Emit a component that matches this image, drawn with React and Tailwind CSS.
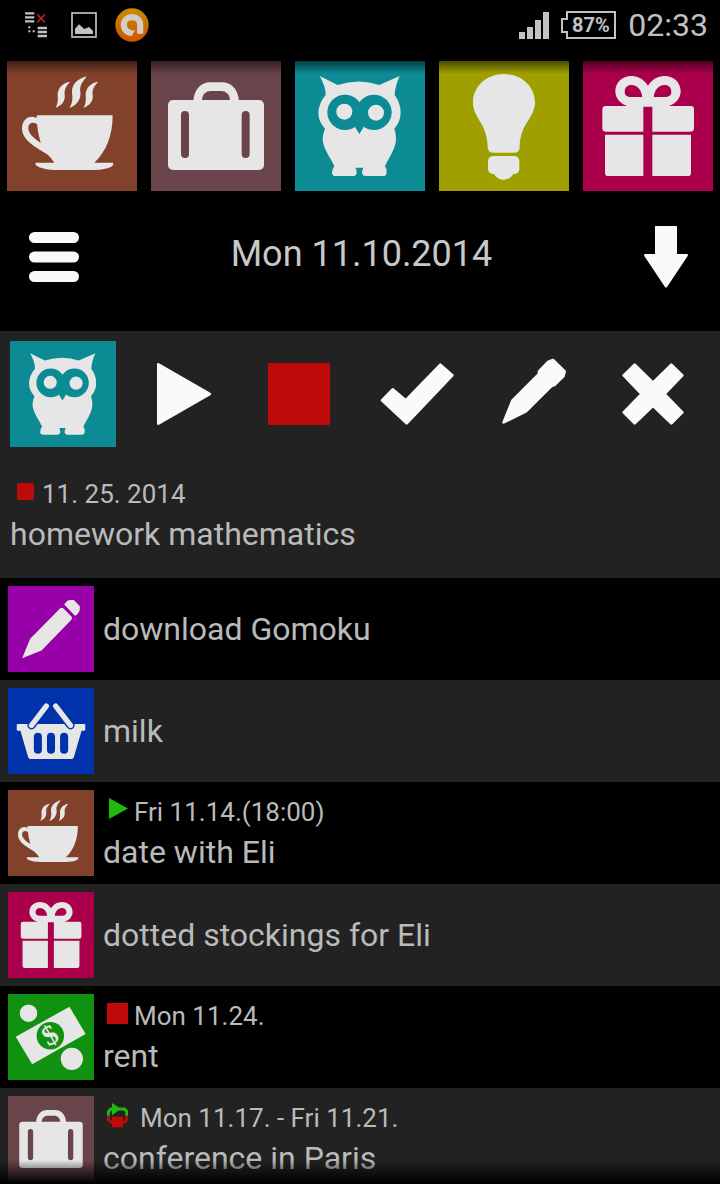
import React from "react";

/* ---------- category drawings ---------- */

function Cup() {
  return (
    <svg viewBox="0 0 390 390" className="w-full h-full fill-[#e6e6e6]" aria-hidden="true">
      <path
        fillRule="evenodd"
        d="M90 163H317C317 222 298 272 262 305H318C324 314 308 325 262 327H145C105 325 80 315 86 305H142C137 298 130 288 120 280C90 260 45 240 45 202C45 175 68 160 88 171ZM91 192C85 182 64 182 64 202C64 220 84 234 101 245C98 230 92 215 91 192Z"
      />
      <path d="M190 62C170 64 150 80 152 105C154 122 150 132 146 141C165 133 176 120 173 100C171 84 178 75 190 62Z" />
      <path d="M239 46C215 52 193 68 195 96C198 118 195 128 187 141C212 132 223 112 220 92C217 72 228 62 239 46Z" />
      <path d="M274 62C254 64 234 80 236 105C238 122 234 132 230 141C249 133 260 120 257 100C255 84 262 75 274 62Z" />
    </svg>
  );
}

function Suitcase() {
  return (
    <svg viewBox="0 0 390 390" className="w-full h-full fill-[#e6e6e6]" aria-hidden="true">
      <rect x="51" y="117" width="288" height="210" rx="15" />
      <path d="M127 119C130 85 150 64 178 64H213C241 64 261 85 264 119H237C237 100 225 90 210 90H180C165 90 153 100 153 119Z" />
      <rect x="90" y="150" width="24" height="141" rx="12" fill="#69444a" />
      <rect x="272" y="150" width="24" height="141" rx="12" fill="#69444a" />
    </svg>
  );
}

function Owl() {
  return (
    <svg viewBox="0 0 390 390" className="w-full h-full fill-[#e6e6e6]" aria-hidden="true">
      <path d="M74 45L128 72Q193 51 253 72L314 45Q300 76 299 102Q317 126 317 155Q317 181 298 203Q303 216 303 232C303 262 285 285 270 315Q277 325 275 335Q274 345 264 345H212Q201 345 201 334Q201 328 205 320H181Q186 328 185 335Q184 345 174 345H122Q112 345 111 335Q110 326 118 315C104 285 83 262 83 232Q84 216 90 203Q70 181 70 155Q71 126 92 102Q92 76 74 45Z" />
      <g fill="#0d8b95">
        <circle cx="150" cy="154" r="53" />
        <circle cx="237" cy="154" r="53" />
        <path d="M193 170L180 198L193 219L206 198Z" />
      </g>
      <circle cx="148" cy="152" r="24" />
      <circle cx="243" cy="155" r="24" />
    </svg>
  );
}

function Bulb() {
  return (
    <svg viewBox="0 0 390 390" className="w-full h-full fill-[#e6e6e6]" aria-hidden="true">
      <path d="M195 39C247 39 288 76 288 124C288 172 243 187 242 258Q242 275 226 275H162Q147 275 146 258C145 187 102 172 102 124C102 76 143 39 195 39Z" />
      <rect x="147" y="285" width="94" height="54" rx="15" />
      <path d="M162 332C174 364 214 364 226 332Z" />
    </svg>
  );
}

function Gift() {
  return (
    <svg viewBox="0 0 390 390" className="w-full h-full fill-[#e6e6e6]" aria-hidden="true">
      <path
        fillRule="evenodd"
        d="M138 137C112 130 97 112 97 91C97 64 118 45 145 45C168 45 185 58 195 74C205 58 222 45 245 45C272 45 293 64 293 91C293 112 278 130 252 137ZM125 92C125 102 132 108 145 108H178C176 90 165 72 145 72C133 72 125 80 125 92ZM265 92C265 102 258 108 245 108H212C214 90 225 72 245 72C257 72 265 80 265 92Z"
      />
      <path d="M68 135H181V212H68Q58 212 58 202V145Q58 135 68 135ZM208 135H323Q333 135 333 145V202Q333 212 323 212H208Z" />
      <path d="M66 221H181V345H76Q66 345 66 335ZM208 221H324V335Q324 345 314 345H208Z" />
    </svg>
  );
}

function Pencil() {
  return (
    <svg viewBox="0 0 256 256" className="w-full h-full fill-[#e6e6e6]" aria-hidden="true">
      <path d="M42 215L66 157L154 68Q160 62 166 68L189 91Q193 96 188 101L100 192Z" />
      <path d="M168 56Q167 53 170 51L178 43Q181 41 196 42L212 58Q216 62 212 77L204 86Q200 89 197 86Z" />
    </svg>
  );
}

function Basket() {
  return (
    <svg viewBox="0 0 256 256" className="w-full h-full fill-[#e6e6e6]" aria-hidden="true">
      <path d="M29 107H227Q230 107 230 110V124Q230 127 226 127H219L196 206Q194 211 190 211H66Q62 211 60 206L37 127H30Q26 127 26 124V110Q26 107 29 107Z" />
      <g fill="#0033ab">
        <rect x="77" y="133" width="24" height="63" rx="12" />
        <rect x="116" y="133" width="24" height="63" rx="12" />
        <rect x="155" y="133" width="24" height="63" rx="12" />
      </g>
      <g fill="none" strokeLinecap="round">
        <path d="M114 54L70 111M142 54L186 111" stroke="#0033ab" strokeWidth="25" />
        <path d="M114 54L70 111M142 54L186 111" stroke="#e6e6e6" strokeWidth="16" />
      </g>
    </svg>
  );
}

function Money() {
  return (
    <svg viewBox="0 0 256 256" className="w-full h-full fill-[#e6e6e6]" aria-hidden="true">
      <path d="M23 127L183 38L231 119L72 209Z" />
      <circle cx="126" cy="124" r="41" fill="#109210" />
      <text
        x="126"
        y="150"
        textAnchor="middle"
        transform="rotate(-30 126 124)"
        className="font-['Liberation_Serif',serif] font-bold text-[84px]"
      >
        $
      </text>
      <circle cx="61" cy="57" r="29" stroke="#109210" strokeWidth="6" />
      <circle cx="190" cy="193" r="36" stroke="#109210" strokeWidth="6" />
    </svg>
  );
}

/* ---------- small date markers ---------- */

function StartMark() {
  return (
    <svg viewBox="0 0 21 21" className="w-[21px] h-[21px] mb-2 shrink-0" aria-hidden="true">
      <path d="M2 0L21 10.5L2 21Z" fill="#20b90c" />
    </svg>
  );
}

function DueMark() {
  return <span className="w-[21px] h-[21px] mb-1.5 shrink-0 bg-[#bf0a0a]" />;
}

function RangeMark() {
  return (
    <svg viewBox="0 0 63 75" className="w-[21px] h-[25px] mb-1.5 mr-1.5 shrink-0" aria-hidden="true">
      <g fill="none" strokeWidth="9">
        <path d="M4 38V26L12 18H18M36 18H52L59 25V38" stroke="#20b90c" />
        <path d="M4 38V50L12 57H18M44 57H52L59 50V38" stroke="#bf0a0a" />
      </g>
      <path d="M15 0L42 17L15 37Z" fill="#20b90c" />
      <rect x="15" y="41" width="33" height="32" fill="#bf0a0a" />
    </svg>
  );
}

/* ---------- data ---------- */

const categories = [
  { name: "Leisure", color: "bg-[#82412b]", Icon: Cup },
  { name: "Travel", color: "bg-[#69444a]", Icon: Suitcase },
  { name: "School", color: "bg-[#0d8b95]", Icon: Owl },
  { name: "Ideas", color: "bg-[#9fa000]", Icon: Bulb },
  { name: "Gifts", color: "bg-[#aa004b]", Icon: Gift },
];

const tasks = [
  { title: "download Gomoku", color: "bg-[#9800a8]", Icon: Pencil },
  { title: "milk", color: "bg-[#0033ab]", Icon: Basket },
  { title: "date with Eli", date: "Fri 11.14.(18:00)", Mark: StartMark, color: "bg-[#82412b]", Icon: Cup },
  { title: "dotted stockings for Eli", color: "bg-[#aa004b]", Icon: Gift },
  { title: "rent", date: "Mon 11.24.", Mark: DueMark, color: "bg-[#109210]", Icon: Money },
  { title: "conference in Paris", date: "Mon 11.17. - Fri 11.21.", Mark: RangeMark, color: "bg-[#69444a]", Icon: Suitcase },
];

const actions = [
  {
    name: "Start",
    color: "fill-[#fafafa] stroke-[#fafafa]",
    d: "M52 31L206 120L52 209Z",
  },
  {
    name: "Stop",
    color: "fill-[#bf0a0a] stroke-[#bf0a0a]",
    d: "M31 31H209V209H31Z",
  },
  {
    name: "Done",
    color: "fill-[#fafafa] stroke-[#fafafa]",
    d: "M15 139L47 106L86 139L190 32L226 64L89 208Z",
  },
  {
    name: "Edit",
    color: "fill-[#fafafa] stroke-[#fafafa]",
    d: "M26 205L52 140L132 60V52L160 23L174 18L209 52L205 67L178 93L169 96L93 172Z",
  },
  {
    name: "Delete",
    color: "fill-[#fafafa] stroke-[#fafafa]",
    d: "M65 32L120 86L175 32L208 64L154 120L208 175L175 208L120 155L65 208L32 175L86 120L32 64Z",
  },
];

/* ---------- sections ---------- */

function StatusBar() {
  return (
    <div className="h-[50px] pl-6 pr-3 flex items-center justify-between text-[#c2c2c2]">
      <div className="flex items-center">
        <svg viewBox="0 0 72 78" className="w-6 h-[26px]" aria-hidden="true">
          <path
            d="M3 4H31M3 16H31M3 28H31M41 48H69M41 60H69M41 72H69"
            stroke="#c2c2c2"
            strokeWidth="7"
          />
          <path d="M13 43h6v6h-6zM13 55h6v6h-6zM26 55h6v6h-6z" fill="#c2c2c2" />
          <path d="M40 7L62 31M62 7L40 31" stroke="#b02222" strokeWidth="5" />
        </svg>
        <svg viewBox="0 0 78 78" className="w-[26px] h-[26px] ml-[23px]" aria-hidden="true">
          <rect x="3" y="3" width="72" height="72" fill="none" stroke="#c2c2c2" strokeWidth="5" />
          <path d="M12 66V50L24 37L40 51L54 45L66 57V66Z" fill="#c2c2c2" />
        </svg>
        <svg viewBox="0 0 100 100" className="w-[34px] h-[34px] ml-[18px]" aria-hidden="true">
          <defs>
            <linearGradient id="orange" x1="0" y1="0" x2="0" y2="1">
              <stop offset="0" stopColor="#c98c00" />
              <stop offset="1" stopColor="#cc5500" />
            </linearGradient>
          </defs>
          <circle cx="50" cy="50" r="49" fill="url(#orange)" />
          <path
            d="M50 73C36 74 26 63 26 49C26 36 36 27 50 27C64 27 74 36 74 49V76"
            fill="none"
            stroke="#d2cdc6"
            strokeWidth="18"
          />
          <path d="M38 72L60 64L50 80Z" fill="#d2cdc6" />
        </svg>
      </div>

      <div className="flex items-center">
        <svg viewBox="0 0 30 27" className="w-[30px] h-[27px] fill-[#c2c2c2]" aria-label="Signal">
          <path d="M0 20H6V27H0ZM8 15H14V27H8ZM16 8H22V27H16ZM24 0H30V27H24Z" />
        </svg>
        <div className="relative ml-3">
          <svg viewBox="0 0 55 28" className="w-[55px] h-7" aria-hidden="true">
            <path d="M6 1H54V27H6V21H1V8H6Z" fill="none" stroke="#c2c2c2" strokeWidth="2" />
          </svg>
          <span className="absolute inset-0 pl-1 flex items-center justify-center text-[20px] font-bold">
            87%
          </span>
        </div>
        <span className="ml-3 text-[32px] leading-10">02:33</span>
      </div>
    </div>
  );
}

function CategoryBar() {
  return (
    <nav className="relative pt-[11px] px-[7px]">
      <div className="grid grid-cols-5 gap-[14px]">
        {categories.map(({ name, color, Icon }) => (
          <button key={name} aria-label={name} className={`aspect-square ${color}`}>
            <Icon />
          </button>
        ))}
      </div>
      <div className="absolute inset-x-0 top-0 h-6 bg-gradient-to-b from-black to-transparent pointer-events-none" />
    </nav>
  );
}

function DateHeader() {
  return (
    <header className="h-[140px] pl-[29px] pr-8 pb-2 flex items-center justify-between">
      <button aria-label="Menu" className="w-[50px]">
        <svg viewBox="0 0 50 50" className="w-[50px] h-[50px] fill-[#fafafa]" aria-hidden="true">
          <rect width="50" height="11" rx="5.5" />
          <rect y="19.5" width="50" height="11" rx="5.5" />
          <rect y="39" width="50" height="11" rx="5.5" />
        </svg>
      </button>
      <h1 className="pb-1.5 text-[36px] leading-10 text-[#c8c8c8]">Mon 11.10.2014</h1>
      <button aria-label="Sort" className="w-11">
        <svg viewBox="0 0 44 62" className="w-11 h-[62px] fill-[#fafafa]" aria-hidden="true">
          <path d="M11 0H33V28H43Q45 29 43 31L23 61Q22 62 21 61L1 31Q-1 29 1 28H11Z" />
        </svg>
      </button>
    </header>
  );
}

function SelectedTask() {
  return (
    <section className="bg-[#222222] pl-2.5 pr-2 pt-2.5 pb-6">
      <div className="flex items-center">
        <div className="w-[106px] h-[106px] mr-1.5 shrink-0 bg-[#0d8b95]">
          <Owl />
        </div>
        {actions.map(({ name, color, d }) => (
          <button key={name} aria-label={name} className="flex-1 flex justify-center">
            <svg viewBox="0 0 240 240" className={`w-20 h-20 ${color}`} aria-hidden="true">
              <path d={d} strokeWidth="8" strokeLinejoin="round" />
            </svg>
          </button>
        ))}
      </div>
      <div className="mt-[27px] pl-[7px] flex items-center gap-2 text-[26px] leading-10 text-[#bababa]">
        <span className="w-[17px] h-[17px] mb-1.5 rounded-[2px] bg-[#bf0a0a]" />
        11. 25. 2014
      </div>
      <h2 className="text-[32px] leading-10 text-[#bababa]">homework mathematics</h2>
    </section>
  );
}

function TaskRow({ title, date, Mark, color, Icon }) {
  return (
    <li className="h-[102px] pl-2 flex items-center gap-[9px] even:bg-[#222222]">
      <div className={`w-[86px] h-[86px] shrink-0 ${color}`}>
        <Icon />
      </div>
      <div className="min-w-0 text-[#bababa]">
        {date ? (
          <div className="pb-0.5">
            <div className="pl-1 h-10 flex items-center gap-[6px] text-[26px] leading-10">
              <Mark />
              {date}
            </div>
            <div className="text-[32px] leading-10">{title}</div>
          </div>
        ) : (
          <div className="text-[32px] leading-10">{title}</div>
        )}
      </div>
    </li>
  );
}

export default function App() {
  return (
    <div className="relative h-screen overflow-hidden bg-black font-['Roboto',sans-serif]">
      <StatusBar />
      <CategoryBar />
      <DateHeader />
      <SelectedTask />
      <ul>
        {tasks.map((task) => (
          <TaskRow key={task.title} {...task} />
        ))}
      </ul>
      {/* bottom fade */}
      <div className="absolute inset-x-0 bottom-0 h-6 bg-gradient-to-b from-transparent to-black pointer-events-none" />
    </div>
  );
}
